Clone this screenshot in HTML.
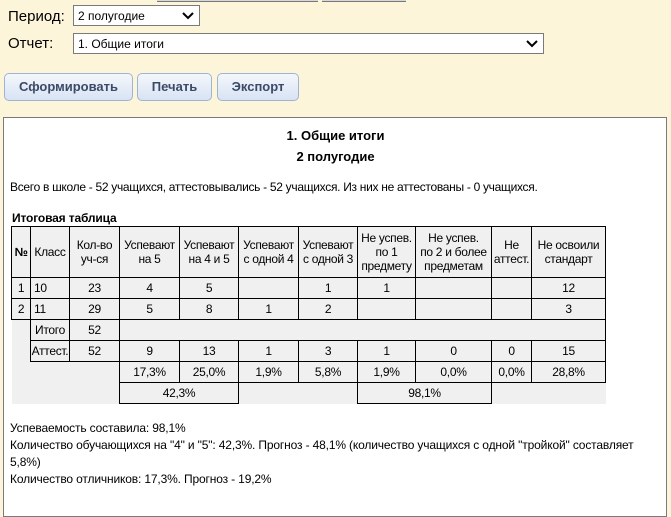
<!DOCTYPE html>
<html><head><meta charset="utf-8"><style>
*{margin:0;padding:0;box-sizing:border-box}
body{width:671px;height:508px;background:#fdf5da;font-family:"Liberation Sans",sans-serif;position:relative;overflow:hidden;color:#000}
.a{position:absolute;white-space:nowrap}
.sel{position:absolute;background:#fff;border:1px solid #7a7a7a;font-size:12px;padding:3px 0 0 4px;height:21px}
.sel svg{position:absolute;right:5px;top:6px}
.btn{position:absolute;top:73px;height:28px;border:1px solid #9fb4d3;border-radius:5px;background:linear-gradient(#f4f7fc,#d8e3f4);font-weight:bold;font-size:13px;color:#3b4a66;text-align:center;line-height:26px}
.panel{position:absolute;left:3px;top:117px;width:664px;height:400px;background:#fff;border:1px solid #7a7a7a}
.t{position:absolute;font-size:12px;letter-spacing:-0.15px}
.c{position:absolute;border:1px solid #000;font-size:12px;text-align:center;display:flex;align-items:center;justify-content:center;line-height:14px;margin-left:-1px;margin-top:-1px;letter-spacing:-0.3px}
</style></head><body>
<div class="a" style="left:157px;top:-1px;width:161px;height:3px;background:#d8d8d8;border-bottom:1px solid #777"></div>
<div class="a" style="left:322px;top:-1px;width:84px;height:3px;background:#d8d8d8;border-bottom:1px solid #777"></div>
<div class="a" style="left:8px;top:8px;font-size:15px">Период:</div>
<div class="sel" style="left:73px;top:5px;width:127px">2 полугодие<svg width="12" height="8" viewBox="0 0 12 8"><path d="M1 1 L6 6 L11 1" stroke="#000" stroke-width="2" fill="none"/></svg></div>
<div class="a" style="left:8px;top:35px;font-size:15px">Отчет:</div>
<div class="sel" style="left:73px;top:33px;width:471px">1. Общие итоги<svg width="12" height="8" viewBox="0 0 12 8"><path d="M1 1 L6 6 L11 1" stroke="#000" stroke-width="2" fill="none"/></svg></div>
<div class="btn" style="left:4px;width:129px">Сформировать</div>
<div class="btn" style="left:137px;width:75px">Печать</div>
<div class="btn" style="left:217px;width:82px">Экспорт</div>
<div class="panel"></div>
<div class="a" style="left:0;width:671px;text-align:center;top:128px;font-weight:bold;font-size:13px">1. Общие итоги</div>
<div class="a" style="left:0;width:671px;text-align:center;top:149px;font-weight:bold;font-size:13px">2 полугодие</div>
<div class="t a" style="left:10px;top:180px;letter-spacing:-0.3px">Всего в школе - 52 учащихся, аттестовывались - 52 учащихся. Из них не аттестованы - 0 учащихся.</div>
<div class="t a" style="left:12px;top:211px;font-weight:bold;font-size:12px">Итоговая таблица</div>
<div class="a" style="left:12px;top:227px;width:594px;height:177px;background:#f0f0f0"></div>
<div class="c" style="left:12px;top:227px;width:20px;height:52px;font-weight:bold">№</div>
<div class="c" style="left:31px;top:227px;width:40px;height:52px">Класс</div>
<div class="c" style="left:70px;top:227px;width:51px;height:52px">Кол-во<br>уч-ся</div>
<div class="c" style="left:120px;top:227px;width:61px;height:52px">Успевают<br>на 5</div>
<div class="c" style="left:180px;top:227px;width:60px;height:52px">Успевают<br>на 4 и 5</div>
<div class="c" style="left:239px;top:227px;width:61px;height:52px">Успевают<br>с одной 4</div>
<div class="c" style="left:299px;top:227px;width:60px;height:52px">Успевают<br>с одной 3</div>
<div class="c" style="left:358px;top:227px;width:59px;height:52px">Не успев.<br>по 1<br>предмету</div>
<div class="c" style="left:416px;top:227px;width:77px;height:52px">Не успев.<br>по 2 и более<br>предметам</div>
<div class="c" style="left:492px;top:227px;width:41px;height:52px">Не<br>аттест.</div>
<div class="c" style="left:532px;top:227px;width:75px;height:52px">Не освоили<br>стандарт</div>
<div class="c" style="left:12px;top:278px;width:20px;height:22px">1</div>
<div class="c" style="left:31px;top:278px;width:40px;height:22px;justify-content:flex-start;padding-left:3px">10</div>
<div class="c" style="left:70px;top:278px;width:51px;height:22px">23</div>
<div class="c" style="left:120px;top:278px;width:61px;height:22px">4</div>
<div class="c" style="left:180px;top:278px;width:60px;height:22px">5</div>
<div class="c" style="left:239px;top:278px;width:61px;height:22px"></div>
<div class="c" style="left:299px;top:278px;width:60px;height:22px">1</div>
<div class="c" style="left:358px;top:278px;width:59px;height:22px">1</div>
<div class="c" style="left:416px;top:278px;width:77px;height:22px"></div>
<div class="c" style="left:492px;top:278px;width:41px;height:22px"></div>
<div class="c" style="left:532px;top:278px;width:75px;height:22px">12</div>
<div class="c" style="left:12px;top:299px;width:20px;height:22px">2</div>
<div class="c" style="left:31px;top:299px;width:40px;height:22px;justify-content:flex-start;padding-left:3px">11</div>
<div class="c" style="left:70px;top:299px;width:51px;height:22px">29</div>
<div class="c" style="left:120px;top:299px;width:61px;height:22px">5</div>
<div class="c" style="left:180px;top:299px;width:60px;height:22px">8</div>
<div class="c" style="left:239px;top:299px;width:61px;height:22px">1</div>
<div class="c" style="left:299px;top:299px;width:60px;height:22px">2</div>
<div class="c" style="left:358px;top:299px;width:59px;height:22px"></div>
<div class="c" style="left:416px;top:299px;width:77px;height:22px"></div>
<div class="c" style="left:492px;top:299px;width:41px;height:22px"></div>
<div class="c" style="left:532px;top:299px;width:75px;height:22px">3</div>
<div class="c" style="left:31px;top:320px;width:40px;height:22px">Итого</div>
<div class="c" style="left:70px;top:320px;width:51px;height:22px">52</div>
<div class="a" style="left:605px;top:320px;width:1px;height:21px;background:#000"></div>
<div class="c" style="left:31px;top:341px;width:40px;height:22px">Аттест.</div>
<div class="c" style="left:70px;top:341px;width:51px;height:22px">52</div>
<div class="c" style="left:120px;top:341px;width:61px;height:22px">9</div>
<div class="c" style="left:180px;top:341px;width:60px;height:22px">13</div>
<div class="c" style="left:239px;top:341px;width:61px;height:22px">1</div>
<div class="c" style="left:299px;top:341px;width:60px;height:22px">3</div>
<div class="c" style="left:358px;top:341px;width:59px;height:22px">1</div>
<div class="c" style="left:416px;top:341px;width:77px;height:22px">0</div>
<div class="c" style="left:492px;top:341px;width:41px;height:22px">0</div>
<div class="c" style="left:532px;top:341px;width:75px;height:22px">15</div>
<div class="c" style="left:120px;top:362px;width:61px;height:22px">17,3%</div>
<div class="c" style="left:180px;top:362px;width:60px;height:22px">25,0%</div>
<div class="c" style="left:239px;top:362px;width:61px;height:22px">1,9%</div>
<div class="c" style="left:299px;top:362px;width:60px;height:22px">5,8%</div>
<div class="c" style="left:358px;top:362px;width:59px;height:22px">1,9%</div>
<div class="c" style="left:416px;top:362px;width:77px;height:22px">0,0%</div>
<div class="c" style="left:492px;top:362px;width:41px;height:22px">0,0%</div>
<div class="c" style="left:532px;top:362px;width:75px;height:22px">28,8%</div>
<div class="c" style="left:120px;top:383px;width:120px;height:22px">42,3%</div>
<div class="c" style="left:358px;top:383px;width:135px;height:22px">98,1%</div>
<div class="t a" style="left:10px;top:421px">Успеваемость составила: 98,1%</div>
<div class="t a" style="left:10px;top:438px">Количество обучающихся на "4" и "5": 42,3%. Прогноз - 48,1% (количество учащихся с одной "тройкой" составляет</div>
<div class="t a" style="left:10px;top:455px">5,8%)</div>
<div class="t a" style="left:10px;top:472px">Количество отличников: 17,3%. Прогноз - 19,2%</div>
</body></html>
